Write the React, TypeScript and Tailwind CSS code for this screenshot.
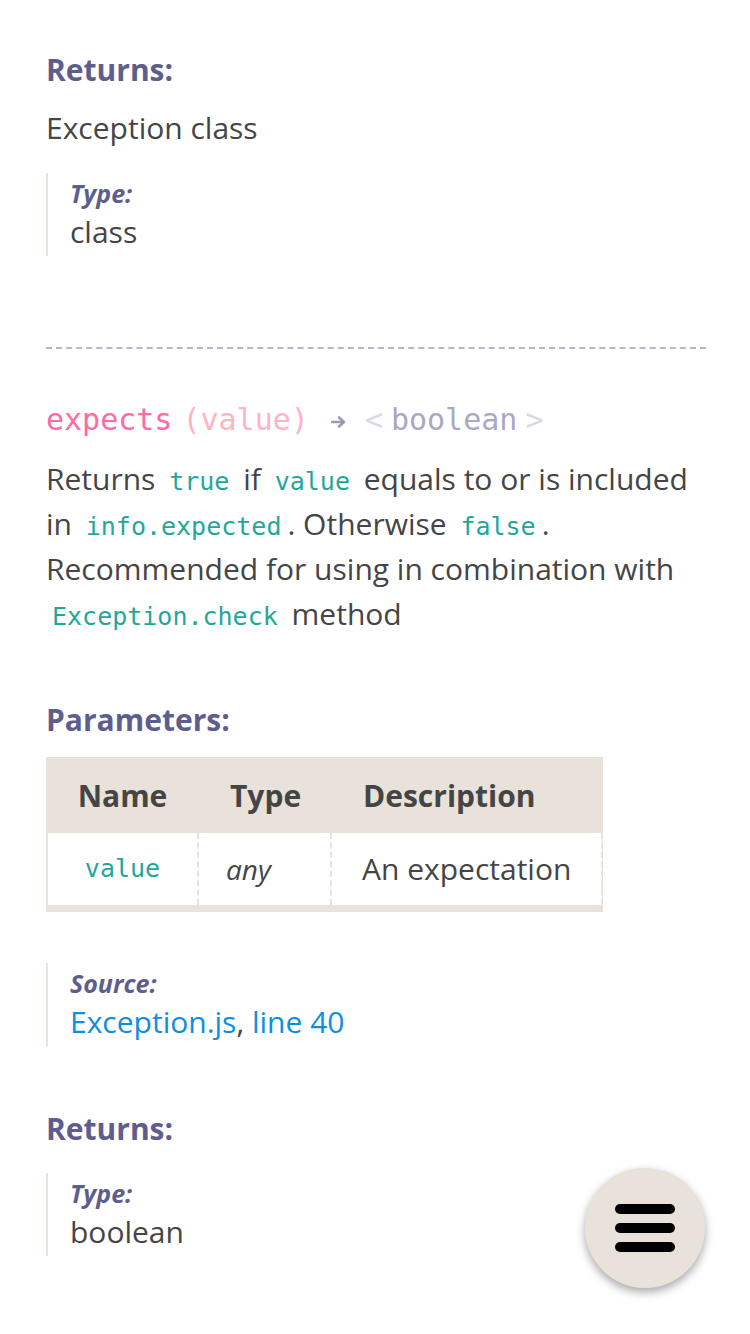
import React from 'react';

const mono = "font-['DejaVu_Sans_Mono','Liberation_Mono',monospace]";

const Code: React.FC<{ children: React.ReactNode }> = ({ children }) => (
    <code className={`${mono} text-[25px] leading-none text-[#1fa89a] px-[6px]`}>{children}</code>
);

const Heading: React.FC<{ children: React.ReactNode }> = ({ children }) => (
    <h5 className="text-[30px] font-bold text-[#5d5e8e] leading-[40px]">{children}</h5>
);

const TypeBlock: React.FC<{ label: string; children: React.ReactNode }> = ({ label, children }) => (
    <div className="border-l-2 border-[#e8e2da] pl-[22px] pt-[5px] h-[83px]">
        <div className="text-[25px] font-bold italic text-[#5d5e8e] leading-[30px]">{label}</div>
        <div className="text-[30px] leading-[48px] text-[#454545]">{children}</div>
    </div>
);

export default function App() {
    return (
        <div className="min-h-[1334px] bg-white font-['Open_Sans','Noto_Sans',sans-serif] text-[#454545] px-[44px] pt-[50px] relative">
            {/* previous member: returns */}
            <div className="pl-[2px]">
                <Heading>Returns:</Heading>
            </div>
            <p className="text-[30px] leading-[40px] mt-[18px] pl-[2px]">Exception class</p>
            <div className="mt-[25px] pl-[2px]">
                <TypeBlock label="Type:">class</TypeBlock>
            </div>

            <hr className="mt-[91px] ml-[2px] border-0 border-t-2 border-dashed border-[#b7b7cc]" />

            <div className="pl-[2px]">
                {/* expects */}
                <h4 className={`${mono} mt-[51px] text-[30px] leading-[40px] flex items-center`}>
                    <span className="text-[#ff69a4]">expects</span>
                    <span className="text-[#ffb4bf] ml-[10px]">(value)</span>
                    <svg width="16" height="14" viewBox="0 0 16 14" className="ml-[22px] mr-[18px] mt-[4px]">
                        <path d="M1 7h11" stroke="#9a9ab4" strokeWidth="2.6" strokeLinecap="round" />
                        <path d="M8 2.5l5 4.5-5 4.5" fill="none" stroke="#9a9ab4" strokeWidth="2.6" strokeLinecap="round" strokeLinejoin="round" />
                    </svg>
                    <span className="text-[#d8d8e6]">&lt;</span>
                    <span className="text-[#a9a9c4] mx-[8px]">boolean</span>
                    <span className="text-[#d8d8e6]">&gt;</span>
                </h4>

                <p className="text-[30px] leading-[45px] mt-[16px]">
                    Returns <Code>true</Code> if <Code>value</Code> equals to or is included in <Code>info.expected</Code>. Otherwise <Code>false</Code>. Recommended for using in combination with <Code>Exception.check</Code> method
                </p>

                <div className="mt-[64px]">
                    <Heading>Parameters:</Heading>
                </div>

                <table className="mt-[17px] border-collapse bg-[#e8e2da] border-b-[7px] border-[#e8e2da]">
                    <thead>
                        <tr className="h-[76px] text-[30px] text-[#454545]">
                            <th className="w-[151px] p-0 text-center font-bold">Name</th>
                            <th className="w-[133px] p-0 text-left pl-[32px] font-bold">Type</th>
                            <th className="w-[271px] p-0 text-left pl-[32px] font-bold">Description</th>
                        </tr>
                    </thead>
                    <tbody>
                        <tr className="h-[75px] bg-white">
                            <td className="p-0 text-center border-l-2 border-[#e8e2da]">
                                <span className={`${mono} text-[25px] text-[#1fa89a]`}>value</span>
                            </td>
                            <td className="p-0 pl-[27px] border-l-2 border-dashed border-[#e8e2da] text-[28px] italic">any</td>
                            <td className="p-0 pl-[30px] border-l-2 border-dashed border-r-2 border-[#e8e2da] text-[30px]">An expectation</td>
                        </tr>
                    </tbody>
                </table>

                <div className="mt-[51px]">
                    <TypeBlock label="Source:">
                        <span className="text-[#0d8ede]">Exception.js</span>, <span className="text-[#0d8ede]">line 40</span>
                    </TypeBlock>
                </div>

                <div className="mt-[63px]">
                    <Heading>Returns:</Heading>
                </div>
                <div className="mt-[24px]">
                    <TypeBlock label="Type:">boolean</TypeBlock>
                </div>
            </div>

            {/* floating menu button */}
            <button className="absolute left-[585px] top-[1168px] w-[120px] h-[120px] rounded-full bg-[#e8e2da] shadow-[0_4px_10px_rgba(0,0,0,0.35)] flex flex-col items-center justify-center gap-[9px]">
                <span className="block w-[60px] h-[10px] rounded-full bg-black" />
                <span className="block w-[60px] h-[10px] rounded-full bg-black" />
                <span className="block w-[60px] h-[10px] rounded-full bg-black" />
            </button>
        </div>
    );
}
